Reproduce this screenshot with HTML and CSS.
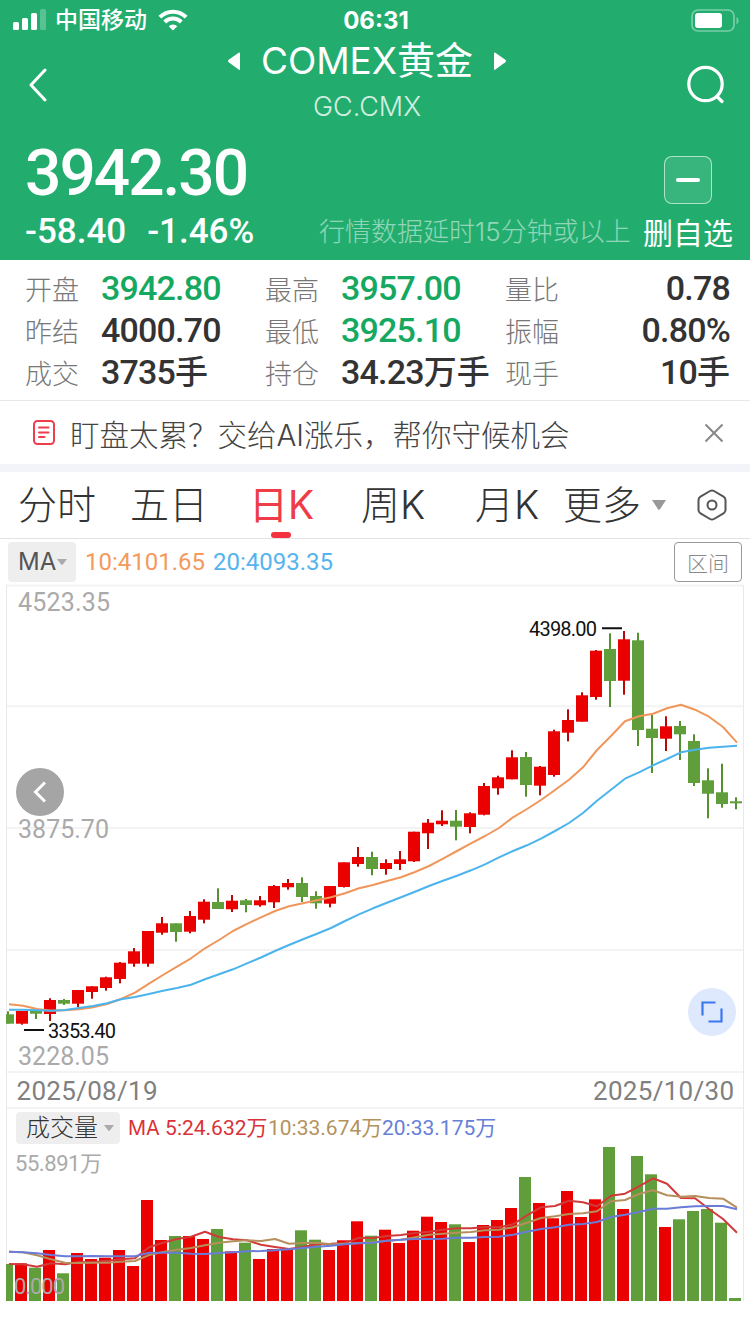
FILE: index.html
```
<!doctype html>
<html lang="zh-CN">
<head>
<meta charset="UTF-8">
<title>COMEX黄金</title>
<link rel="stylesheet" href="styles.css">
<script src="chart.js"></script>
</head>
<body>
	<div class="header">
		<div class="status">
			<svg class="signal" width="34" height="22" viewBox="0 0 34 22" fill="#fff">
				<rect x="0" y="13" width="6" height="8" rx="1.5"/>
				<rect x="9" y="9" width="6" height="12" rx="1.5"/>
				<rect x="18" y="4" width="6" height="17" rx="1.5"/>
				<rect x="27" y="0" width="6" height="21" rx="1.5" opacity=".25"/>
			</svg>
			<span class="carrier">中国移动</span>
			<svg class="wifi" width="30" height="22" viewBox="0 0 30 22" fill="none" stroke="#fff" stroke-width="4">
				<path d="M1.9 8.1a18.5 18.5 0 0 1 26.200 0"/>
				<path d="M6.700 13a11.800 11.800 0 0 1 16.600 0"/>
				<path d="M15 21.500l-4.300-4.300a6 6 0 0 1 8.600 0z" fill="#fff" stroke="none"/>
			</svg>
			<span class="clock">06:31</span>
			<svg class="battery" width="48" height="23" viewBox="0 0 48 23">
				<rect x="1" y="1" width="42" height="21" rx="6" fill="none" stroke="#fff" stroke-width="1.700" opacity=".4"/>
				<rect x="4" y="4" width="27" height="15" rx="3" fill="#fff"/>
				<path d="M45.500 8c2.700 1.500 2.700 6 0 7.500z" fill="#fff" opacity=".4"/>
			</svg>
		</div>
		<div class="nav">
			<svg class="back" width="20" height="34" viewBox="0 0 20 34"><path d="M17 2L3 17l14 15" fill="none" stroke="#fff" stroke-width="3" stroke-linecap="round" stroke-linejoin="round"/></svg>
			<div class="title">
				<div class="name">
					<svg width="12" height="18" viewBox="0 0 12 18"><path d="M12 1.500v15.500q0 1.500-1.400.500L.7 10.200q-1.300-1.200 0-2.400L10.600.7Q12 0 12 1.500z" fill="#fff"/></svg>
					<h1>COMEX<span>黄金</span></h1>
					<svg width="12" height="18" viewBox="0 0 12 18"><path d="M0 1.500v15.500q0 1.500 1.400.500l9.900-7.300q1.300-1.200 0-2.400L1.400.7Q0 0 0 1.500z" fill="#fff"/></svg>
				</div>
				<div class="code">GC.CMX</div>
			</div>
			<svg class="search" width="40" height="42" viewBox="0 0 40 42" fill="none" stroke="#fff" stroke-width="3.200" stroke-linecap="round"><circle cx="19.500" cy="20" r="16.700"/><path d="M31 32.500l5 5"/></svg>
		</div>
		<div class="quote">
			<div class="quote-left">
				<div class="price">3942.30</div>
				<div class="change"><span>-58.40</span><span class="pct">-1.46%</span></div>
			</div>
			<div class="delay">行情数据延时15分钟或以上</div>
			<div class="fav">
				<div class="fav-box"><i></i></div>
				<div>删自选</div>
			</div>
		</div>
	</div>

	<div class="stats">
		<div><label>开盘</label><b class="down">3942.80</b></div>
		<div><label>最高</label><b class="down">3957.00</b></div>
		<div class="last"><label>量比</label><b>0.78</b></div>
		<div><label>昨结</label><b>4000.70</b></div>
		<div><label>最低</label><b class="down">3925.10</b></div>
		<div class="last"><label>振幅</label><b>0.80%</b></div>
		<div><label>成交</label><b>3735<em>手</em></b></div>
		<div><label>持仓</label><b>34.23<em>万手</em></b></div>
		<div class="last"><label>现手</label><b>10<em>手</em></b></div>
	</div>

	<div class="notice">
		<svg width="22" height="25" viewBox="0 0 22 25" fill="none" stroke="#ee3d4c" stroke-width="2">
			<rect x="1" y="1" width="20" height="23" rx="3.500"/>
			<path d="M6 7.500h9.500M6 12.500h9.500M6 17h5.500" stroke-linecap="round"/>
		</svg>
		<p>盯盘太累？交给AI涨乐，帮你守候机会</p>
		<svg width="20" height="20" viewBox="0 0 20 20"><path d="M1.500 1.500l17 17M18.500 1.500l-17 17" stroke="#888" stroke-width="2"/></svg>
	</div>

	<div class="tabs">
		<span class="t1">分时</span>
		<span class="t2">五日</span>
		<span class="t3 on">日K</span>
		<span class="t4">周K</span>
		<span class="t5">月K</span>
		<span class="t6">更多</span>
		<svg class="more" width="14" height="10" viewBox="0 0 14 10"><path d="M0 0h14L8 9.200q-1 1-2 0z" fill="#999"/></svg>
		<svg class="setting" width="30" height="32" viewBox="0 0 30 32" fill="none" stroke="#555" stroke-width="2"><path d="M13 2q2-1.200 4 0l9.500 5.600q2 1.200 2 3.400v10q0 2.200-2 3.400L17 30q-2 1.200-4 0l-9.500-5.600q-2-1.200-2-3.400V11q0-2.200 2-3.400z"/><circle cx="15" cy="16" r="4.500"/></svg>
	</div>

	<div class="ma-bar">
		<div class="select">MA<svg width="10" height="6" viewBox="0 0 10 6"><path d="M0 0h10L6 5.300q-1 1-2 0z" fill="#aaa"/></svg></div>
		<span class="ma10">10:4101.65</span>
		<span class="ma20">20:4093.35</span>
		<div class="range">区间</div>
	</div>

	<div class="chart">
		<svg id="chart" width="750" height="750" viewBox="0 584 750 750">
			<path class="grid" d="M6 585.500H743M6 706.200H743M6 828H743M6 950H743M6 1072H743M6 1108H743"/>
			<path class="frame" d="M6.500 585V1301M743.500 585V1301"/>
			<g id="candles"></g>
			<g id="vols"></g>
			<g id="lines"></g>
			<g class="axis">
				<text x="18" y="611" textLength="92">4523.35</text>
				<text x="18" y="838" textLength="91">3875.70</text>
				<text x="18" y="1065" textLength="91">3228.05</text>
			</g>
			<g class="date">
				<text x="16.500" y="1100" textLength="141">2025/08/19</text>
				<text x="593" y="1100" textLength="141">2025/10/30</text>
			</g>
			<g class="mark">
				<text x="529" y="636" textLength="68">4398.00</text>
				<path d="M602 628.300h20M24 1030h20"/>
				<text x="48" y="1038" textLength="68">3353.40</text>
			</g>
			<g class="vol-text">
				<text x="15" y="1171" textLength="87">55.891万</text>
				<text x="14" y="1294" textLength="51">0.000</text>
			</g>
		</svg>
		<div class="prev"><svg width="14" height="22" viewBox="0 0 14 22"><path d="M12 1.500L2.500 11l9.500 9.500" fill="none" stroke="#fff" stroke-width="3"/></svg></div>
		<div class="full"><svg width="24" height="24" viewBox="0 0 24 24"><path d="M2.500 15.500V2.500h13M8.500 21.500h13V8.500" fill="none" stroke="#3a78f2" stroke-width="2.200"/></svg></div>
		<div class="vol-bar">
			<div class="select">成交量<svg width="10" height="6" viewBox="0 0 10 6"><path d="M0 0h10L6 5.300q-1 1-2 0z" fill="#aaa"/></svg></div>
			<span class="v5"><u>MA</u> 5:24.632万</span>
			<span class="v10">10:33.674万</span>
			<span class="v20">20:33.175万</span>
		</div>
	</div>
</body>
</html>
```
FILE: styles.css
```
*{
	box-sizing:border-box;
}
body{
	margin:0;
	width:750px;
	height:1334px;
	overflow:hidden;
	background:#fff;
	color:#333;
	font-family:Inter,"Noto Sans CJK SC",sans-serif;
}
svg{
	display:block;
	flex:none;
}
h1,p{
	margin:0;
	font-weight:normal;
}

/* header */
.header{
	height:260px;
	background:#22ad6f;
	color:#fff;
}
.status{
	height:40px;
	display:flex;
	align-items:center;
	padding:0 11px 0 13px;
}
.signal{
	margin-top:-1px;
}
.carrier{
	width:95px;
	margin-left:8px;
	font-size:23px;
	font-weight:500;
	line-height:40px;
	white-space:nowrap;
}
.wifi{
	margin-left:8px;
}
.clock{
	width:72px;
	margin-left:152px;
	font-size:24px;
	font-weight:700;
	text-align:center;
	white-space:nowrap;
}
.battery{
	margin-left:auto;
}
.nav{
	height:90px;
	display:flex;
	align-items:center;
	padding:0 24px 0 28px;
}
.title{
	flex:1;
	text-align:center;
}
.name{
	display:flex;
	justify-content:center;
	align-items:center;
	gap:21px;
	height:44px;
	margin-top:-4px;
}
.name h1{
	font-size:37px;
	line-height:44px;
	white-space:nowrap;
}
.name h1 span{
	font-size:38px;
}
.code{
	margin-top:3px;
	font-size:27px;
	line-height:42px;
	font-weight:300;
	opacity:.8;
}
.quote{
	height:130px;
	display:flex;
	padding:10px 16px 0 25px;
}
.quote-left{
	width:294px;
	font-family:Roboto,"Noto Sans CJK SC",sans-serif;
	font-weight:500;
}
.price{
	font-size:64px;
	line-height:68px;
	letter-spacing:-2px;
}
.change{
	display:flex;
	gap:21px;
	font-size:35px;
	line-height:48px;
}
.delay{
	width:314px;
	margin-top:72px;
	font-size:26px;
	line-height:40px;
	font-weight:300;
	opacity:.5;
	white-space:nowrap;
}
.fav{
	margin:16px 0 0 10px;
	width:91px;
	font-size:30px;
	line-height:58px;
	white-space:nowrap;
}
.fav-box{
	width:48px;
	height:48px;
	margin-left:21px;
	border:1px solid rgba(255,255,255,.6);
	border-radius:8px;
	background:rgba(255,255,255,.1);
	display:flex;
	align-items:center;
	justify-content:center;
}
.fav-box i{
	width:24px;
	height:4px;
	border-radius:2px;
	background:#fff;
}

/* stats */
.stats{
	height:141px;
	padding:7px 20px 0 25px;
	border-bottom:1px solid #e8e8e8;
	display:grid;
	grid-template-columns:240px 240px 225px;
	grid-auto-rows:42px;
}
.stats div{
	display:flex;
	align-items:center;
	white-space:nowrap;
}
.stats label{
	width:76px;
	font-size:27px;
	font-weight:300;
	color:#777;
}
.stats b{
	font-family:Roboto,"Noto Sans CJK SC",sans-serif;
	font-size:34px;
	line-height:42px;
	font-weight:500;
	letter-spacing:-.8px;
}
.stats em{
	font-style:normal;
	font-size:33px;
	letter-spacing:0;
}
.stats .last b{
	margin-left:auto;
}
.stats .down{
	color:#14a860;
}

/* notice */
.notice{
	height:71px;
	display:flex;
	align-items:center;
	padding:0 26px 0 33px;
	border-bottom:8px solid #f2f4f9;
}
.notice p{
	flex:1;
	margin-left:15px;
	font-size:29.500px;
	font-weight:300;
	color:#444;
}

/* tabs */
.tabs{
	height:67px;
	display:flex;
	align-items:center;
	padding-left:18px;
	border-bottom:1px solid #e3e3e3;
	font-size:39px;
	font-weight:300;
	line-height:66px;
	white-space:nowrap;
}
.tabs span{
	flex:none;
}
.t1{width:112px;}
.t2{width:119px;}
.t3{width:112px;}
.t4{width:114px;}
.t5{width:88px;}
.t6{width:89px;}
.tabs .on{
	position:relative;
	color:#ee3d48;
	font-weight:400;
}
.tabs .on:after{
	content:"";
	position:absolute;
	left:22px;
	bottom:0;
	width:20px;
	height:6px;
	border-radius:3px;
	background:#f2323f;
}
.setting{
	margin-left:31px;
}

/* indicators */
.ma-bar{
	height:45px;
	display:flex;
	align-items:center;
	padding:0 8px;
	font-family:Roboto,sans-serif;
	font-size:24px;
}
.select{
	display:flex;
	align-items:center;
	background:#eee;
	border-radius:4px;
	white-space:nowrap;
}
.ma-bar .select{
	width:68px;
	height:40px;
	padding-left:10px;
	gap:1px;
	font-family:Inter,sans-serif;
	color:#555;
}
.ma10{
	width:128px;
	margin-left:9px;
	color:#f39a5c;
}
.ma20{
	color:#55b4ee;
}
.range{
	width:68px;
	height:40px;
	margin-left:auto;
	border:1px solid #999;
	border-radius:4px;
	color:#888;
	font:300 21px/38px "Noto Sans CJK SC",sans-serif;
	text-align:center;
}

/* chart */
.chart{
	position:relative;
}
.chart text{
	font-family:Roboto,"Noto Sans CJK SC",sans-serif;
}
.grid{
	stroke:#f3f3f3;
	stroke-width:2;
}
.frame{
	stroke:#e9e9e9;
}
.axis{
	font-size:25px;
	fill:#aaa;
}
.date{
	font-size:26px;
	fill:#808080;
}
.mark{
	font-size:20px;
	fill:#111;
}
.mark path{
	stroke:#111;
	stroke-width:2;
}
.vol-text{
	font-size:22px;
	fill:#aaa;
}
#lines polyline{
	fill:none;
	stroke-width:2;
	stroke-linejoin:round;
}
.prev,.full{
	position:absolute;
	width:48px;
	height:48px;
	border-radius:50%;
	display:flex;
	align-items:center;
	justify-content:center;
}
.prev{
	left:16px;
	top:184px;
	background:#a5a5a5;
}
.full{
	left:688px;
	top:404px;
	background:#dfe9fd;
}
.vol-bar{
	position:absolute;
	left:16px;
	top:528px;
	display:flex;
	align-items:center;
	font-family:Roboto,"Noto Sans CJK SC",sans-serif;
	font-size:21px;
	line-height:32px;
	white-space:nowrap;
}
.vol-bar .select{
	width:104px;
	height:32px;
	padding-left:10px;
	gap:6px;
	font-size:24px;
	font-weight:300;
}
.vol-bar u{
	font-family:Inter,sans-serif;
	font-size:20px;
	text-decoration:none;
}
.v5{
	width:140px;
	margin-left:8px;
	color:#d93238;
}
.v10{
	width:114px;
	color:#b3925c;
}
.v20{
	color:#6680d8;
}
```
FILE: chart.js
```
var RED="#eb0000";
var GREEN="#5f9e3a";
var STEP=14;

//high, body top, body bottom, low (r: up, g: down)
var candles=[
	["g",1011.3,1014.3,1023.7,1023.7],["r",1011,1011,1023.7,1024.7],["g",1010,1010.7,1013.7,1019],
	["r",998.3,1000,1014,1021],["g",999,1000,1003.7,1005],["r",990,990,1003.7,1007],
	["r",986.3,986.3,992,998.7],["r",976.7,977.3,988,990.7],["r",962,962.7,979,983.3],
	["r",948,951.3,963.7,966.7],["r",931,931,963.7,966.7],["r",917,923.3,932.7,934.7],
	["g",923.3,923.3,932,941.7],["r",911,916,931.7,933.3],["r",899.3,901.7,919.7,923.3],
	["g",888.3,902,909,909],["r",895,900.7,909.3,912],["g",899,900.3,905,912.3],
	["r",896,900.3,905.3,906.7],["r",885,886,902.3,908],["r",879,883,887.3,889.7],
	["g",877.3,883,897,902],["g",891.3,896,903.3,908.7],["r",886,886,903.7,907.3],
	["r",862.3,862.3,887,887.5],["r",847,857,864,866.7],["g",851.7,857,869,875.3],
	["r",859.3,863,869,874.7],["r",851,859.3,864,870],["r",831.7,831.7,861.3,862],
	["r",819,822.7,833.3,849],["r",810.3,820.7,824.3,826],["g",810,820.7,826.7,840.3],
	["r",812.3,813.3,827,833.3],["r",783,786,814.7,815.3],["r",775.7,777.3,788.3,794.7],
	["r",750.3,757.3,779.3,779.3],["g",752,757,785,796.7],["r",766,766.7,785.7,795.3],
	["r",729.7,731.3,775,776.7],["r",709.3,720,732.7,741.3],["r",692.3,695.3,721.7,721.7],
	["r",650,650.7,697,699.7],["g",633.3,649,681,707],["r",631,639.3,680.7,694.7],
	["g",632.7,640.3,730,746],["g",714.7,728.7,738,773],["r",716.3,726.3,738.7,751],
	["g",721,726,734.3,760],["g",734.3,741,783,786],["g",768.3,780.3,793.7,818.3],
	["g",763.7,792.3,804,807.7],["g",797.3,801.3,803.3,809.3]
];
//top of each volume bar
var vols=[1264,1263.3,1267.7,1250,1273.3,1253,1259,1257.7,1250,1266,1200,1240,1236,1236,1239,1229,1251.3,1242.7,1259,1249,1248.7,1230.3,1239.7,1250,1240.3,1221.3,1235.7,1229.7,1243,1230.7,1216.7,1222,1224.3,1242,1225,1220,1208,1177,1203,1218.3,1191,1217,1199.3,1147,1209,1156,1174.3,1227,1219.3,1211,1209,1222.7,1298];

var lines=[
	["#f0965a",[1004.3,1005.7,1009,1010.7,1010.3,1009.3,1007.3,1004,999,992.7,983.7,975,966.7,958.3,948.3,940,931,923.8,917.3,911,906.3,903.3,900.3,897.3,893.3,888.3,885,881,877.3,872,866,858.7,851,843.3,836,828,817.3,809,800,790,779.7,767.3,750,736,721.3,716.3,713.7,708.3,704.7,709.7,716.7,727,742.7]],
	["#4bb4ec",[1009.7,1009.7,1010.3,1010.7,1010,1008,1006,1003.3,999.3,997,994,990.7,988,984.7,979.3,974.3,969.3,963.3,957.5,951,945,939.3,933.7,928,921,914.3,908.3,902.7,897.3,891.7,886,880.7,875.7,870.3,864.3,857.3,851,845.3,838.7,831,823,813,800.7,789.7,778.7,772.3,765.3,759,752.3,749.7,747.7,746.7,745.7]],
	["#d23a3a",[1264,1264.3,1266.7,1263.3,1264.3,1262,1262.3,1260.7,1259.3,1258.3,1247.3,1242.7,1239,1236.7,1231.7,1237,1239.3,1240.3,1244.7,1247,1249,1247,1244,1243.7,1243,1237.7,1238,1236,1235,1233,1231.7,1229.7,1228.3,1228.3,1227,1227.3,1224.3,1215.3,1207.3,1206,1200.7,1202.3,1206.3,1195.7,1193.7,1186.3,1178.3,1183.7,1198,1198.3,1209,1219,1232.7]],
	["#b58f5c",[1251.7,1252.3,1255.3,1259.3,1262.7,1263,1262.7,1262.7,1261.7,1261,1255,1252,1249.7,1248,1245.3,1242.7,1241.3,1240.3,1241,1239,1243.7,1243,1242.7,1244.3,1243.7,1243,1242.3,1240.7,1239.7,1237.3,1234.7,1233.7,1232.7,1232,1230.3,1229.7,1227.3,1222.7,1218,1216.3,1214,1213.3,1211.3,1201.3,1200,1194,1190.3,1195.3,1196.7,1196,1198,1198.7,1207.7]],
	["#6a7cd8",[1251.7,1252.3,1253.3,1255,1256.3,1256.3,1256,1256.3,1256.3,1256.3,1252.7,1252.7,1252.7,1253.7,1254,1253,1252.3,1251.3,1251,1250.3,1249.3,1248,1246.7,1245.7,1244.3,1243.3,1242.7,1240.7,1239.7,1239,1239,1238.7,1237.7,1237.7,1237,1236.7,1234.7,1231.7,1229,1227.3,1224.7,1224,1222,1217,1214.7,1212,1208.7,1208.7,1207.3,1206.3,1206,1206,1209.3]]
];

function rect(x,y,w,h,color){
	return '<rect x="'+x+'" y="'+y+'" width="'+w+'" height="'+h+'" fill="'+color+'"/>';
}

function drawChart(){
	var html="";
	var volHtml="";
	for(var i=0;i<candles.length;i++){
		var c=candles[i];
		var x=8+i*STEP;
		var up=c[0]=="r";
		var color=up ? RED : GREEN;
		//first one is cut by the frame
		var left=Math.max(x-6,6);
		html+=rect(x-1,c[1],2,c[4]-c[1],up ? "#b80808" : "#55902f");
		html+=rect(left,c[2],x+6-left,c[3]-c[2],color);
		left=Math.max(x-7,6);
		volHtml+=rect(left,vols[i],x+5-left,1301-vols[i],color);
	}
	document.getElementById("candles").innerHTML=html;
	document.getElementById("vols").innerHTML=volHtml;

	html="";
	for(var i=0;i<lines.length;i++){
		var pts=lines[i][1].map(function(y,n){
			return (9+n*STEP)+","+y;
		});
		html+='<polyline points="'+pts.join(" ")+'" stroke="'+lines[i][0]+'"/>';
	}
	document.getElementById("lines").innerHTML=html;
}

addEventListener("load",drawChart);
```
